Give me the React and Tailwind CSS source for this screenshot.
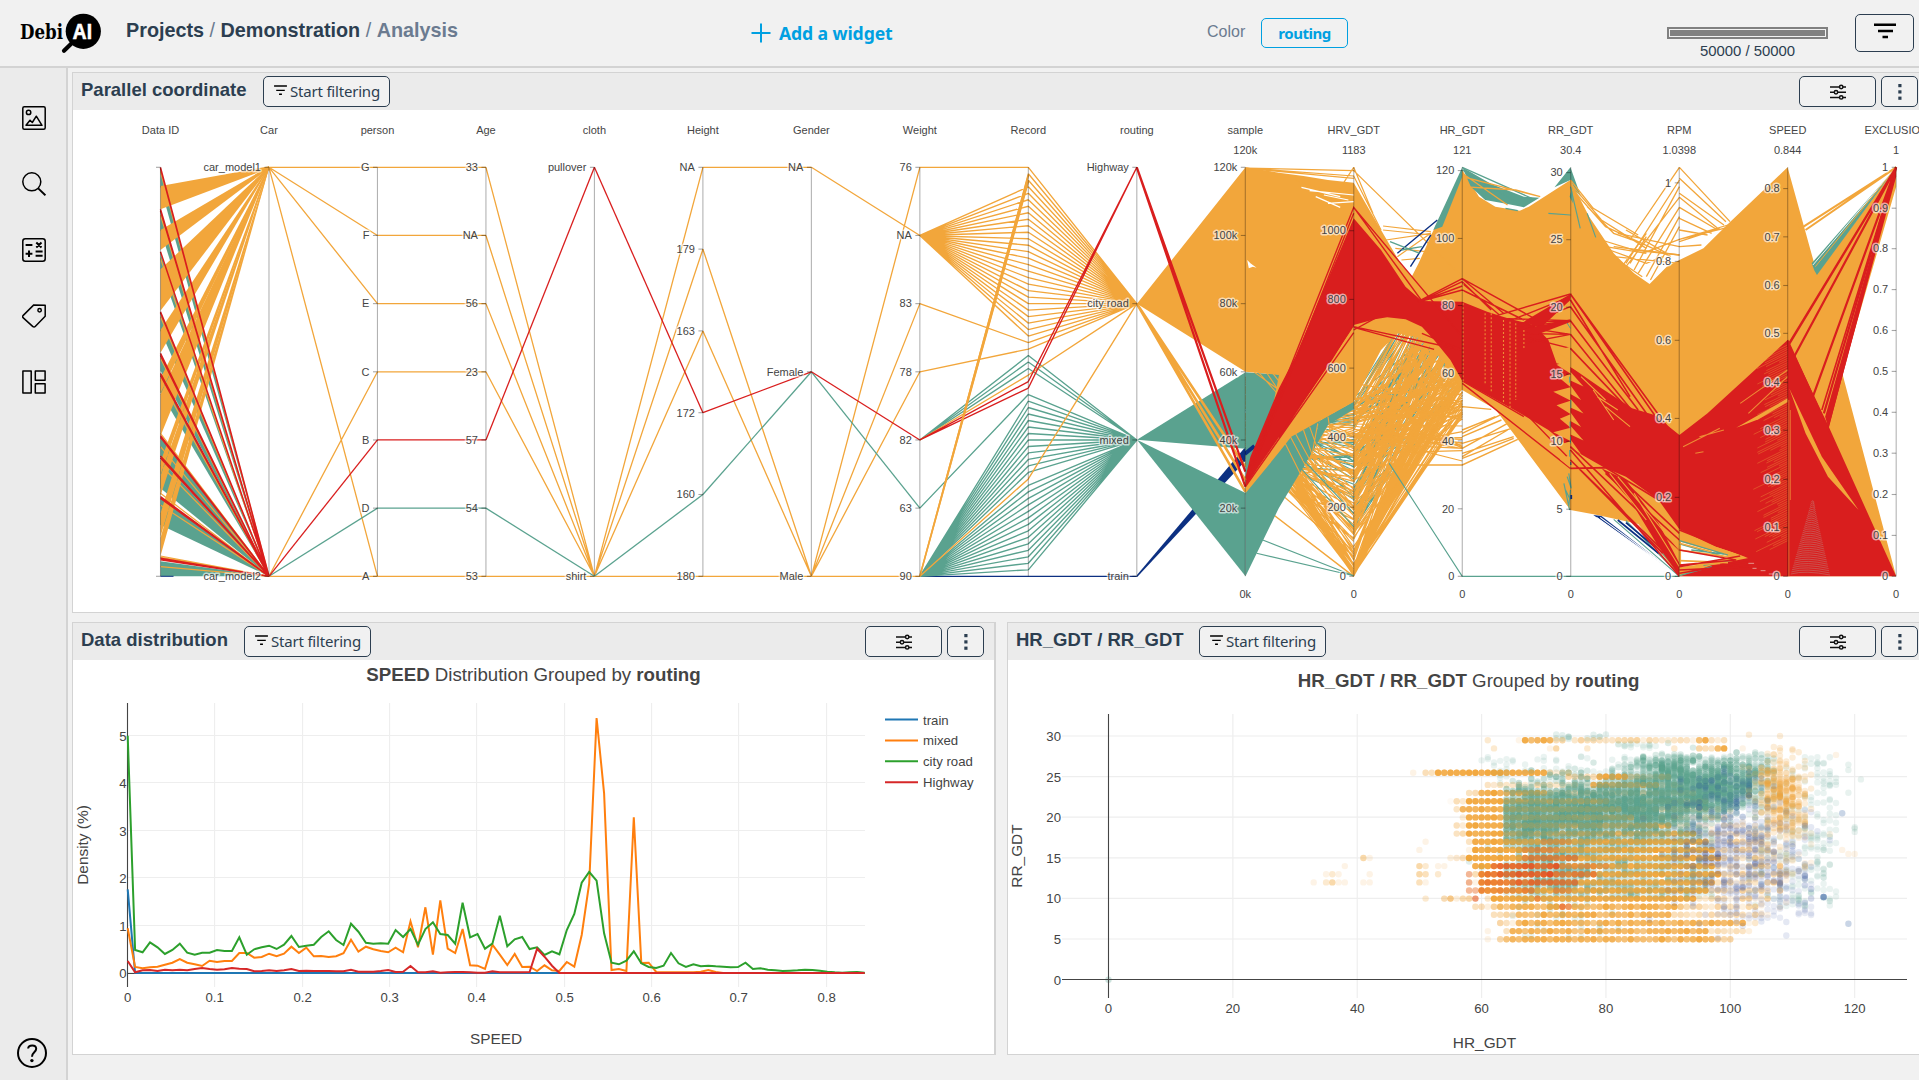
import React from "react";

const ORANGE = "#f2a63b";
const TEAL = "#5aa28f";
const RED = "#d91e1e";
const NAVY = "#0c3082";

function makeRandom(seed) {
  let s = seed;
  return () => {
    s = (s + 0x6d2b79f5) | 0;
    let t = Math.imul(s ^ (s >>> 15), 1 | s);
    t = (t + Math.imul(t ^ (t >>> 7), 61 | t)) ^ t;
    return ((t ^ (t >>> 14)) >>> 0) / 4294967296;
  };
}

/* ---------- icons ---------- */

function FilterLines({ className }) {
  return (
    <svg viewBox="0 0 18 14" className={className} stroke="#000" strokeWidth="2">
      <path d="M0 1.5h18M3 7.5h12M7 13h4" />
    </svg>
  );
}

function Sliders() {
  return (
    <svg viewBox="0 0 16 16" className="h-4 w-4" fill="none" stroke="#111" strokeWidth="1.5">
      <path d="M0 3h9.5M13 3h3M0 8.2h4M8 8.2h8M0 13.4h9.5M13 13.4h3" />
      <circle cx="11.2" cy="3" r="1.7" />
      <circle cx="6" cy="8.2" r="1.7" />
      <circle cx="11.2" cy="13.4" r="1.7" />
    </svg>
  );
}

function Dots() {
  return (
    <svg viewBox="0 0 4 18" className="h-[18px] w-1" fill="#2c3e50">
      <rect x="0.3" y="1" width="3.2" height="3.2" />
      <rect x="0.3" y="7.3" width="3.2" height="3.2" />
      <rect x="0.3" y="13.6" width="3.2" height="3.2" />
    </svg>
  );
}

function SideIcon({ children }) {
  return (
    <svg viewBox="0 0 24 24" className="block h-6 w-6" fill="none" stroke="#000" strokeWidth="1.5" strokeLinejoin="round">
      {children}
    </svg>
  );
}

function Logo() {
  return (
    <svg viewBox="0 0 84 42" className="block h-[42px] w-[84px]">
      <text x="0" y="26.7" fontSize="20.5" textLength="43" lengthAdjust="spacingAndGlyphs" fill="#000" className="font-['DejaVu_Serif'] font-bold">Debi</text>
      <path d="M52.5 30.5L44 38.7" stroke="#000" strokeWidth="4.2" strokeLinecap="round" />
      <circle cx="63.3" cy="19.3" r="17.6" fill="#000" />
      <text x="53" y="26.8" fontSize="21.5" textLength="19.5" lengthAdjust="spacingAndGlyphs" fill="#fff" stroke="#fff" strokeWidth="0.4" className="font-['Open_Sans'] font-bold">AI</text>
    </svg>
  );
}

/* ---------- parallel coordinates ---------- */

const AX = Array.from({ length: 17 }, (_, i) => 160.5 + i * 108.48);
const T = 167.3;
const B = 576.3;
const H = B - T;

const AXES = [
  { name: "Data ID", ticks: [["", 0], ["", 1]] },
  { name: "Car", ticks: [["car_model1", 0], ["car_model2", 1]] },
  { name: "person", ticks: [["G", 0], ["F", 1 / 6], ["E", 2 / 6], ["C", 3 / 6], ["B", 4 / 6], ["D", 5 / 6], ["A", 1]] },
  { name: "Age", ticks: [["33", 0], ["NA", 1 / 6], ["56", 2 / 6], ["23", 3 / 6], ["57", 4 / 6], ["54", 5 / 6], ["53", 1]] },
  { name: "cloth", ticks: [["pullover", 0], ["shirt", 1]] },
  { name: "Height", ticks: [["NA", 0], ["179", 0.2], ["163", 0.4], ["172", 0.6], ["160", 0.8], ["180", 1]] },
  { name: "Gender", ticks: [["NA", 0], ["Female", 0.5], ["Male", 1]] },
  { name: "Weight", ticks: [["76", 0], ["NA", 1 / 6], ["83", 2 / 6], ["78", 3 / 6], ["82", 4 / 6], ["63", 5 / 6], ["90", 1]] },
  { name: "Record", ticks: [] },
  { name: "routing", ticks: [["Highway", 0], ["city road", 1 / 3], ["mixed", 2 / 3], ["train", 1]] },
  { name: "sample", max: "120k", min: "0k", ticks: [["120k", 0], ["100k", 1 / 6], ["80k", 2 / 6], ["60k", 3 / 6], ["40k", 4 / 6], ["20k", 5 / 6]] },
  { name: "HRV_GDT", max: "1183", min: "0", ticks: [["1000", 0.155], ["800", 0.323], ["600", 0.491], ["400", 0.66], ["200", 0.831], ["0", 1]] },
  { name: "HR_GDT", max: "121", min: "0", ticks: [["120", 0.008], ["100", 0.174], ["80", 0.338], ["60", 0.504], ["40", 0.669], ["20", 0.835], ["0", 1]] },
  { name: "RR_GDT", max: "30.4", min: "0", ticks: [["30", 0.013], ["25", 0.177], ["20", 0.342], ["15", 0.506], ["10", 0.67], ["5", 0.836], ["0", 1]] },
  { name: "RPM", max: "1.0398", min: "0", ticks: [["1", 0.038], ["0.8", 0.23], ["0.6", 0.423], ["0.4", 0.614], ["0.2", 0.807], ["0", 1]] },
  { name: "SPEED", max: "0.844", min: "0", ticks: [["0.8", 0.052], ["0.7", 0.17], ["0.6", 0.289], ["0.5", 0.406], ["0.4", 0.526], ["0.3", 0.643], ["0.2", 0.763], ["0.1", 0.881], ["0", 1]] },
  { name: "EXCLUSION", max: "1", min: "0", ticks: [["1", 0], ["0.9", 0.1], ["0.8", 0.199], ["0.7", 0.299], ["0.6", 0.399], ["0.5", 0.499], ["0.4", 0.599], ["0.3", 0.699], ["0.2", 0.8], ["0.1", 0.9], ["0", 1]] },
];

/* value-to-value links between neighbouring categorical axes */
const LINKS = [
  [1, ORANGE, [[0, 0], [0, 1 / 6], [0, 2 / 6], [0, 1], [1, 3 / 6], [1, 1]]],
  [1, TEAL, [[1, 5 / 6]]],
  [1, RED, [[1, 4 / 6]]],
  [2, ORANGE, [[0, 0], [1 / 6, 1 / 6], [2 / 6, 2 / 6], [0.5, 0.5], [1, 1]]],
  [2, TEAL, [[5 / 6, 5 / 6]]],
  [2, RED, [[4 / 6, 4 / 6]]],
  [3, ORANGE, [[0, 1], [1 / 6, 1], [2 / 6, 1], [0.5, 1], [1, 1]]],
  [3, TEAL, [[5 / 6, 1]]],
  [3, RED, [[4 / 6, 0]]],
  [4, ORANGE, [[1, 0], [1, 0.2], [1, 0.4], [1, 1]]],
  [4, TEAL, [[1, 0.8]]],
  [4, RED, [[0, 0.6]]],
  [5, ORANGE, [[0, 0], [0.2, 1], [0.4, 1], [1, 1]]],
  [5, TEAL, [[0.8, 0.5]]],
  [5, RED, [[0.6, 0.5]]],
  [6, ORANGE, [[0, 1 / 6], [1, 0], [1, 2 / 6], [1, 3 / 6], [1, 1]]],
  [6, TEAL, [[0.5, 5 / 6]]],
  [6, RED, [[0.5, 4 / 6]]],
];

function seg(i, a, b) {
  return `M${AX[i]} ${T + a * H}L${AX[i + 1]} ${T + b * H}`;
}

function recordLinks() {
  const out = { [NAVY]: "", [TEAL]: "", [ORANGE]: "", [RED]: "" };
  for (let k = 0; k <= 63; k++) {
    const r = k / 63;
    let color = TEAL;
    let weight = 1;
    let routing = 2 / 3;
    if (k === 0) { color = ORANGE; weight = 0; routing = 1 / 3; }
    else if (k <= 2) { color = ORANGE; weight = 1; routing = 1 / 3; }
    else if (k <= 26) { color = ORANGE; weight = 1 / 6; routing = 1 / 3; }
    else if (k === 27) { color = ORANGE; weight = 2 / 6; routing = 1 / 3; }
    else if (k === 28) { color = ORANGE; weight = 3 / 6; routing = 1 / 3; }
    else if (k <= 31) { weight = 4 / 6; }
    else if (k === 32) { color = ORANGE; weight = 4 / 6; routing = 1 / 3; }
    else if (k <= 34) { color = RED; weight = 4 / 6; routing = 0; }
    else if (k === 35) { weight = 5 / 6; }
    else if (k === 48) { color = ORANGE; routing = 1 / 3; }
    else if (k === 63) { color = NAVY; routing = 1; }
    out[color] += seg(7, weight, r) + seg(8, r, routing);
  }
  return out;
}

const ID_ORANGE = [[558, 628], [690, 750], [808, 932], [990, 1058], [1135, 1180], [1183, 1308], [1385, 1425], [1428, 1487], [1540, 1610], [1613, 1668]];
const ID_TEAL = [[508, 560], [632, 690], [758, 805], [940, 992], [1062, 1112], [1122, 1178], [1312, 1375], [1378, 1465], [1495, 1575], [1684, 1729]];
const ID_RED = [502, 505, 628, 632, 755, 935, 938, 1060, 1066, 1120, 1126, 1307, 1312, 1368, 1374, 1490, 1495, 1675, 1679];

/*
 * The dense right part is kept in a local grid: u = 2.45 px units from
 * x = 1279, v = thirds of a pixel from the page top.
 */
const U = [-348, -82.5, 183, 449, 714, 981, 1246, 1512];

function fan(rnd, n, a, b, from, to) {
  let d = "";
  for (let k = 0; k < n; k++) {
    const y0 = from[0] + (from[1] - from[0]) * rnd();
    const y1 = to[0] + (to[1] - to[0]) * rnd();
    d += `M${U[a]} ${y0.toFixed(0)}L${U[b]} ${y1.toFixed(0)}`;
  }
  return d;
}

function Fill({ color, points }) {
  return <polygon fill={color} points={points} />;
}

function Strokes({ color, d, w = 1.1, o = 1 }) {
  return <path d={d} fill="none" stroke={color} strokeWidth={w} strokeOpacity={o} vectorEffect="non-scaling-stroke" />;
}

function DenseRegion() {
  const rnd = makeRandom(11);
  let saw = "";
  for (let k = 0; k < 9; k++) {
    const v = 1040 + k * 40.5;
    saw += `M714 ${v}L${672 + (k % 3) * 8} ${v + 14}L714 ${v + 40}Z`;
  }
  let sawRight = "";
  for (let k = 0; k < 8; k++) {
    const v = 1075 + k * 40.5;
    sawRight += `M714 ${v}L${740 + (k % 2) * 6} ${v + 44}L714 ${v + 26}Z`;
  }
  let moire = "";
  for (let k = 0; k < 34; k++) {
    const v = 1722 - k * 6.5;
    moire += `M${1254 + k * 1.5} ${v}Q${1290 + k * 0.6} ${v - 12} ${1350 - k * 1.2} ${v + 3}`;
  }
  let speedTex = "";
  for (let k = 0; k < 90; k++) {
    const v = 1035 + k * 6.6;
    const len = 15 + rnd() * 70;
    speedTex += `M1246 ${v.toFixed(0)}L${(1246 - len).toFixed(0)} ${(v + len * 0.6).toFixed(0)}`;
  }
  return (
    <g transform="translate(1279 0) scale(0.408163 0.333333)">
      {/* scribble around the HRV axis */}
      <Strokes color={TEAL} d={fan(rnd, 60, 2, 3, [1190, 1600], [620, 1160])} />
      <Strokes color={ORANGE} d={fan(rnd, 110, 2, 3, [1190, 1729], [620, 1180])} w={1.2} />
      <Strokes color={ORANGE} d={fan(rnd, 50, 2, 3, [1700, 1729], [900, 1260])} w={1.2} />
      <Strokes color={ORANGE} d={fan(rnd, 30, 2, 3, [1250, 1650], [1130, 1260])} w={1.2} />
      <Strokes color={ORANGE} d={fan(rnd, 18, 2, 3, [1190, 1420], [1200, 1395])} w={1.2} />
      <Strokes color={TEAL} d={fan(rnd, 30, 1, 2, [1180, 1400], [1220, 1500])} />
      <Strokes color={ORANGE} d={fan(rnd, 90, 1, 2, [1130, 1400], [1200, 1680])} w={1.2} />
      <Strokes color={ORANGE} d={fan(rnd, 30, 1, 2, [1120, 1300], [1690, 1729])} w={1.2} />
      <Strokes color={ORANGE} d="M183 1395L449 1395L585 1318M449 1370L560 1290M449 1360L575 1310M449 1345L560 1270M449 1330L570 1285M449 1310L545 1260M449 1290L530 1250M449 1220L520 1228M449 1375L575 1315M449 1300L550 1240M449 1220L183 1240M449 1205L183 1150M449 1340L300 1240M-82 1480L183 1729" w={1.4} />

      {/* routing to sample */}
      <Fill color={NAVY} points="-348,1725 -348,1732 -82,1382 -82,1340" />
      <Fill color={TEAL} points="-348,1319 -82,1117 -82,1346" />
      <Fill color={TEAL} points="-348,1319 -82,1479 -82,1729" />
      <Fill color={TEAL} points="-82,1117 0,1123 60,1140 120,1200 100,1262 75,1370 0,1523 -82,1729" />
      <Fill color={TEAL} points="100,1262 183,1205 183,1228 120,1275 70,1380" />
      <Strokes color={ORANGE} w={1.1} d="M95 1270L80 1370M75 1280L110 1400M60 1290L100 1430M40 1300L85 1400M28 1310L75 1420M15 1330L60 1440M120 1250L130 1330M-60 1117L0 1170M-50 1117L10 1200M-30 1119L15 1200M-15 1120L10 1160" />
      <Strokes color={NAVY} w={4} d="M-84 1362L-60 1338" />
      <Strokes color={TEAL} w={1.1} d="M-40 1620L183 1727M-55 1660L183 1727M270 1390L449 1729H981M50 1400L183 1580M60 1380L183 1540" />
      <Fill color={ORANGE} points="-348,911 -82,502 0,518 60,528 120,540 183,548 250,690 300,795 325,830 342,790 375,700 449,510 490,590 530,620 590,632 612,620 714,540 760,650 820,760 870,820 908,852 950,800 981,780 1040,745 1100,672 1246,502 1318,820 1512,502 1512,560 1380,1120 1512,1729 981,1729 880,1572 780,1545 714,1530 585,1318 530,1228 449,1170 400,1080 350,1015 290,1000 250,1050 183,1205 100,1262 30,1310 0,1357 -82,1480 -82,1430 -20,1250 0,1125 -82,1115" />
      <polygon fill="#fff" points="-78,780 -74,805 -64,800 -55,803 -70,790" />

      {/* upper outliers */}
      <Strokes color={ORANGE} w={1.2} d="M-82 504L183 512L449 830M-82 505L183 535M-82 504L183 528L250 690M183 502L120 620M183 502L230 640M40 540L183 600M60 560L183 618M90 575L160 628M183 560L130 610M255 678L372 695M255 690L375 705M262 720L372 700M285 745L360 755M290 770L372 700M300 780L345 775" />
      <Strokes color="#fff" w={1.2} d="M55 562L150 590M75 572L183 585M90 590L150 622M110 585L170 600M120 610L183 605" />
      <Strokes color={NAVY} w={1.4} d="M290 760L388 660M322 800L372 705" />
      <Strokes color={TEAL} w={1.4} d="M272 725L345 760M300 750L350 740" />
      <Fill color={TEAL} points="378,690 449,502 449,530 400,680" />
      <Fill color={TEAL} points="449,502 520,552 600,590 638,593 600,622 560,612 505,600 470,560" />
      <Fill color={TEAL} points="675,562 714,502 740,590 728,575 714,540" />
      <Fill color={TEAL} points="712,590 718,560 720,610" />
      <Strokes color={TEAL} w={1.2} d="M449 502L625 598M449 510L600 620M555 625L585 632M714 560L738 685M755 640L776 712M660 640L714 645" />
      <Strokes color={ORANGE} w={1.3} d="M449 530L640 590M449 560L580 570L640 590M449 520L560 615M714 540L770 625L880 705M714 550L790 660L900 745M720 570L800 680L960 770M755 620L820 700L890 730M790 720L870 750L981 765M800 740L900 760M820 770L981 790M840 800L900 700M810 750L900 790L940 770M830 780L890 830" />
      <Strokes color={ORANGE} w={1.3} d="M981 502L860 720M981 502L1105 665M981 540L850 790M981 535L1095 665M981 560L870 810M981 580L1090 675M981 592L850 800M981 592L1080 690M981 622L880 820M981 622L1075 690M981 650L900 830M981 655L1060 700M981 680L910 840M981 690L1050 705M981 718L890 760M981 718L1100 682M981 740L1035 735M981 740L830 700M981 765L820 740M850 690L950 760M900 710L860 790M981 718L1100 675M981 725L1080 685" />
      <Strokes color={ORANGE} w={2} d="M1285 680L1512 502M1290 690L1512 502M1265 655L1280 690L1310 800" />
      <Fill color={TEAL} points="1305,790 1512,502 1318,825 1312,812" />
      <Strokes color="#fff" w={0.9} d="M1308 795L1512 502" />
      <Strokes color={ORANGE} w={1} d="M1314 800L1512 502" />
      <Fill color={NAVY} points="770,1545 790,1548 981,1729" />
      <Strokes color="#fff" w={1.1} d="M778 1552L975 1724M787 1552L975 1722" />
      <Strokes color={TEAL} w={1.2} d="M820 1558L981 1729M850 1562L981 1725M870 1570L970 1700M710 1420L716 1465L706 1430M702 1470L714 1500M712 1530L698 1450M714 1470L710 1520" />
      <Strokes color={NAVY} w={1.8} d="M830 1560L930 1660M850 1568L920 1640M714 1385V1395M716 1485V1497" />

      {/* red mass */}
      <Fill color={RED} points="-82,1430 -70,1370 0,1165 40,1070 183,655 250,750 310,860 350,903 449,905 510,935 560,955 625,975 660,1020 680,1090 714,1100 790,1165 865,1225 920,1245 981,1305 1050,1240 1246,1020 1345,1275 1512,1729 981,1729 1060,1690 1150,1672 1070,1640 981,1588 930,1500 850,1430 800,1405 714,1345 660,1290 580,1232 449,1143 420,1080 380,1020 350,980 310,958 265,952 235,958 183,975 130,1080 0,1312 -50,1400 -82,1460" />
      <Strokes color={RED} w={1.4} d="M-82 1440L183 622L350 903M-82 1460L183 640M183 622L449 1010M183 990L235 955M183 998L-82 1460M183 980L449 1050L350 1000M183 982L380 1048M183 975L0 1312M340 905L449 836M345 905L449 845M350 903L449 870M350 903L449 858M449 836L550 940M449 845L520 930M449 850L540 945M449 836L625 955M449 870L600 960M510 955L714 882M560 965L714 890M600 975L714 920M540 955L714 962M560 970L714 962M590 980L714 1003M570 985L714 962M580 1000L714 1003L600 1030M600 1010L714 1045M449 1143L600 1250M449 1150L714 1405M600 1235L714 1380" />
      <path d={saw} fill={ORANGE} />
      <path d={sawRight} fill={ORANGE} />
      <Strokes color={TEAL} w={1} d="M712 1130V1148M715 1200V1225M713 1265V1285M714 1310V1330M712 1350V1370M704 965L714 985" />
      <Fill color={RED} points="600,965 714,882 714,900 640,985" />
      <Fill color={RED} points="590,990 714,958 714,966 630,1005" />
      <path d="M505 940V1150M520 940V1180M550 960V1210M566 965V1225M580 970V1200M600 990V1050M451 850V1145" fill="none" stroke={ORANGE} strokeWidth="1.1" strokeDasharray="2 2" strokeOpacity="0.8" vectorEffect="non-scaling-stroke" />
      <Strokes color={RED} w={1.6} d="M714 882L981 1330M714 882L920 1245M714 920L900 1240M714 962L880 1230M714 1003L860 1225M714 1045L850 1220M714 900L860 1190M714 1405L800 1403L930 1500M714 1350L981 1729M714 1380L981 1700M714 1340L981 1650M714 1380L940 1660M800 1420L981 1620M850 1450L981 1600" />
      <Fill color={RED} points="790,1405 850,1440 930,1570 981,1690 981,1729 930,1640 860,1500" />
      <Strokes color={ORANGE} w={1.1} d="M780 1190L830 1230M800 1220L860 1280M830 1430L981 1650M870 1480L981 1700M810 1420L900 1560M740 1130L800 1200M770 1170L820 1260" />

      {/* RPM to SPEED details */}
      <Fill color={ORANGE} points="981,1596 1070,1640 1150,1674 1060,1696 981,1729" />
      <Fill color="#fff" points="985,1626 1075,1658 1105,1670 1060,1690 985,1700" />
      <Strokes color={TEAL} w={1.3} d="M981 1622L1100 1665M981 1632L1090 1670M1010 1650L1090 1662M1040 1696L1110 1680M981 1727L1060 1700" />
      <Strokes color={ORANGE} w={1.6} d="M981 1650L1110 1672M981 1682L1100 1688M981 1695L1080 1690M981 1630L1060 1655" />
      <Strokes color={RED} w={1.6} d="M981 1590L1150 1672M981 1650L1120 1680L981 1695M981 1700L1130 1668M981 1720L1150 1685M981 1710L1150 1700" />
      <Fill color={ORANGE} points="1120,1283 1246,1195 1246,1206 1175,1258" />
      <Strokes color={ORANGE} w={0.7} o={0.5} d={speedTex} />
      <Strokes color={ORANGE} w={1.1} d="M990 1340L1080 1285M1030 1310L1090 1290M1020 1360L1040 1355M1246 1110L1130 1210M1246 1130L1150 1240" o={0.8} />
      <Strokes color={ORANGE} w={1.2} d="M1249 1200V1729M1253 1230V1500" o={0.5} />
      <Fill color={ORANGE} points="1250,1165 1330,1370 1420,1530 1345,1430 1290,1300" />
      <Strokes color="#c08078" w={0.8} o={0.65} d={moire} />
      <Strokes color="#e9c4b8" w={1} o={0.7} d="M1150 1690h14M1180 1712h12M1160 1705h10M1200 1722h14" />
      <Strokes color={RED} w={2.2} d="M1246 1040L1512 502M1250 1030L1512 502M1262 1070L1512 502M1308 1190L1512 502M1335 1240L1512 502M1345 1280L1512 502" />
      <Fill color={RED} points="1338,1250 1512,502 1512,530 1346,1285" />
      <Strokes color={RED} w={1.6} d="M1330 1230L1512 502M1246 1020L1350 1300" />
    </g>
  );
}

function ParallelPlot() {
  const rec = recordLinks();
  const v = (n) => n / 3;
  const x0 = AX[0];
  const x1 = AX[1];
  return (
    <svg viewBox="73 110 1846 502" className="block h-[502px] w-[1846px] shrink-0 font-['Liberation_Sans']">
      <rect x="73" y="110" width="1846" height="502" fill="#fff" />
      {ID_TEAL.map(([a, b]) => (
        <polygon key={a} fill={TEAL} points={`${x0},${v(a)} ${x0},${v(b)} ${x1},${B}`} />
      ))}
      {ID_ORANGE.map(([a, b]) => (
        <polygon key={a} fill={ORANGE} points={`${x0},${v(a)} ${x0},${v(b)} ${x1},${T + 1} ${x1},${T - 1}`} />
      ))}
      <path stroke={ORANGE} strokeWidth="1.2" d={[515, 645, 775, 950, 1075, 1140, 1300, 1340, 1395, 1480, 1515, 1668, 1672, 1700].map((n) => `M${x0} ${v(n)}L${x1} ${B}`).join("")} />
      <path stroke={RED} strokeWidth="1.5" d={ID_RED.map((n) => `M${x0} ${v(n)}L${x1} ${B}`).join("")} />
      <path stroke={NAVY} strokeWidth="1" d={`M${x0} ${B}h13`} />

      {LINKS.map(([i, c, ls], k) => (
        <path key={k} stroke={c} strokeWidth="1.3" d={ls.map(([a, b]) => seg(i, a, b)).join("")} />
      ))}
      {[NAVY, TEAL, ORANGE, RED].map((c) => (
        <path key={c} stroke={c} strokeWidth="1.35" fill="none" d={rec[c]} />
      ))}
      <path stroke={ORANGE} strokeWidth="1.6" d={seg(7, 1, 0.02) + seg(7, 1, 0.035)} />

      <DenseRegion />
      <path stroke={ORANGE} strokeWidth="2.6" d={`M${AX[9]} ${v(911)}L${AX[10]} ${v(1400)}M${AX[9]} ${v(911)}L${AX[10]} ${v(1440)}M${AX[9]} ${v(911)}L${AX[10]} ${v(1475)}`} />
      <path stroke={RED} strokeWidth="2.2" d={`M${AX[9]} ${T}L${AX[10]} ${v(1415)}M${AX[9]} ${T}L${AX[10]} ${v(1460)}`} />

      {AXES.map((a, i) => (
        <g key={a.name} fontSize="11" fill="#444">
          <path d={`M${AX[i]} ${T}V${B}`} stroke="#000" strokeOpacity="0.3" strokeWidth="1.1" />
          <text x={AX[i]} y="134" textAnchor="middle">{a.name}</text>
          {a.max && <text x={AX[i]} y="154" textAnchor="middle">{a.max}</text>}
          {a.min && <text x={AX[i]} y="598" textAnchor="middle">{a.min}</text>}
          {a.ticks.map(([t, f], k) => (
            <g key={k}>
              <path d={`M${AX[i] - 4.5} ${T + f * H}h4.5`} stroke="#000" strokeOpacity="0.35" strokeWidth="1.1" />
              <text x={AX[i] - 8} y={T + f * H + 3.8} textAnchor="end" stroke="#fff" strokeOpacity="0.6" strokeWidth="3" strokeLinejoin="round" paintOrder="stroke">{t}</text>
            </g>
          ))}
        </g>
      ))}
    </svg>
  );
}

/* ---------- distribution ---------- */

const GREEN_V = [377, 1020, 1027, 997, 1012, 1032, 1020, 1001, 1028, 1034, 1028, 1028, 1020, 1023, 1023, 982, 1034, 1018, 1012, 1007, 1017, 1004, 978, 1011, 1007, 1004, 981, 964, 990, 1005, 941, 965, 998, 1001, 1000, 1001, 960, 981, 957, 1004, 957, 937, 972, 975, 1001, 878, 982, 972, 1016, 1001, 917, 1009, 988, 981, 1017, 1012, 1035, 1024, 1033, 960, 912, 818, 786, 812, 970, 1058, 1063, 1052, 1024, 1060, 1071, 1074, 1067, 1029, 1060, 1071, 1063, 1069, 1067, 1069, 1070, 1072, 1071, 1058, 1077, 1075, 1079, 1081, 1083, 1082, 1081, 1079, 1080, 1082, 1085, 1087, 1088, 1087, 1086, 1088];
const MIXED_V = [955, 1071, 1075, 1072, 1070, 1064, 1058, 1047, 1058, 1063, 1068, 1052, 1056, 1053, 1053, 1029, 1029, 1043, 1041, 1031, 1039, 1031, 1010, 1029, 1013, 1039, 1038, 1041, 1039, 1030, 989, 1025, 1010, 1018, 1023, 1027, 1013, 1027, 934, 1012, 892, 1034, 871, 1016, 1029, 957, 1066, 1067, 1077, 1004, 1034, 1065, 1032, 1071, 1070, 1083, 1066, 1081, 1083, 1056, 1070, 975, 820, 324, 550, 1080, 1077, 1083, 622, 1059, 1058, 1086, 1087, 1087, 1087, 1087, 1087, 1085, 1080, 1086];
const RED_V = [1053, 1087, 1081, 1080, 1083, 1079, 1081, 1079, 1081, 1077, 1074, 1077, 1079, 1078, 1074, 1076, 1077, 1084, 1083, 1081, 1083, 1081, 1077, 1083, 1082, 1083, 1083, 1083, 1084, 1084, 1079, 1085, 1085, 1085, 1083, 1080, 1086, 1085, 1068, 1087, 1087, 1084, 1088, 1087, 1086, 1086, 1087, 1088, 1088, 1084, 1087, 1087, 1087, 1087, 1086, 1016, 1040, 1067];
const BLUE_V = [838];

function Series({ values, color }) {
  const pts = [];
  for (let k = 0; k < 100; k++) {
    const val = k < values.length ? values[k] : 1089;
    pts.push(`${(127.7 + k * 7.443).toFixed(1)},${(610 + val / 3).toFixed(1)}`);
  }
  return <polyline points={pts.join(" ")} fill="none" stroke={color} strokeWidth="2" />;
}

function DistributionPlot() {
  const xs = [0, 1, 2, 3, 4, 5, 6, 7, 8].map((k) => [k === 0 ? "0" : `0.${k}`, Math.round(127.8 + k * 87.37) - 0.4]);
  const ys = [0, 1, 2, 3, 4, 5].map((k) => [String(k), Math.round(973.2 - k * 47.54) - 0.5]);
  const legend = [["train", "#1f77b4"], ["mixed", "#ff7f0e"], ["city road", "#2ca02c"], ["Highway", "#d62728"]];
  return (
    <svg viewBox="73 660 921 393" className="block h-[393px] w-[921px] shrink-0 font-['Liberation_Sans']" fill="#444">
      <rect x="73" y="660" width="921" height="393" fill="#fff" />
      <text x="533.5" y="681" fontSize="18.7" textAnchor="middle">
        <tspan className="font-bold">SPEED</tspan> Distribution Grouped by <tspan className="font-bold">routing</tspan>
      </text>
      <g stroke="#eee" strokeWidth="1.1">
        {xs.map(([t, x]) => <path key={t} d={`M${x} 703V987`} />)}
        {ys.map(([t, y]) => <path key={t} d={`M127.5 ${y}H865`} />)}
      </g>
      <path d="M127.5 703V987M127.5 973.5H865" stroke="#444" strokeWidth="1.1" />
      <Series values={BLUE_V} color="#1f77b4" />
      <Series values={MIXED_V} color="#ff7f0e" />
      <Series values={GREEN_V} color="#2ca02c" />
      <Series values={RED_V} color="#d62728" />
      <g fontSize="13.2">
        {xs.map(([t, x]) => <text key={t} x={x} y="1002" textAnchor="middle">{t}</text>)}
        {ys.map(([t, y]) => <text key={t} x="126.5" y={y + 5} textAnchor="end">{t}</text>)}
        {legend.map(([t, c], k) => (
          <g key={t}>
            <path d={`M885 ${719.5 + k * 20.9}H918`} stroke={c} strokeWidth="2" />
            <text x="923" y={724.7 + k * 20.7}>{t}</text>
          </g>
        ))}
      </g>
      <text x="496" y="1044" fontSize="15.4" textAnchor="middle">SPEED</text>
      <text transform="translate(88 845) rotate(-90)" fontSize="15.4" textAnchor="middle">Density (%)</text>
    </svg>
  );
}

/* ---------- scatter ---------- */

const sx = (hr) => 1108.5 + 6.218 * hr;
const sy = (rr) => 979.8 - 8.12 * rr;

/* rr, first hr, last hr, dense from, dense to */
const ROWS = [
  [5, 63, 100, 64, 97], [6, 64, 103, 65, 96], [7, 63, 104, 66, 102], [8, 62, 106, 66, 90], [9, 59, 104, 63, 92],
  [10, 54, 106, 62, 94], [11, 58, 108, 60, 96], [12, 58, 108, 60, 97], [13, 58, 109, 60, 98], [14, 58, 108, 59, 97],
  [15, 55, 107, 58, 98], [16, 58, 106, 59, 97], [17, 58, 105, 59, 96], [18, 56, 104, 58, 94], [19, 56, 102, 58, 90],
  [20, 57, 100, 58, 84], [21, 56, 98, 57, 82], [22, 55, 96, 58, 80], [23, 58, 94, 60, 70], [24, 61, 92, 78, 88],
  [25, 74, 90, 79, 83], [25.5, 51, 74, 53, 70], [28.5, 95, 99, 98, 99], [29.5, 66, 73, 67, 71], [29.5, 75, 99, 95, 96],
];

const LOOSE = [[33, 12, 1], [35, 13, 1], [35, 12, 2], [36, 13, 2], [36, 12, 4], [37, 13, 1], [37, 12, 1], [38, 14, 1], [38, 12, 1], [41, 15, 4], [42, 15, 1], [42, 13, 1], [41, 12, 1], [42, 12, 1], [49, 25.5, 1], [50, 16, 1], [51, 17, 1], [50, 14, 4], [51, 14, 2], [50, 13, 4], [51, 13, 3], [50, 12, 3], [51, 12, 1], [53, 14, 1], [54, 14, 1], [53, 13, 2], [51, 10, 2], [54, 10, 1], [55, 10, 2], [56, 15, 1], [61, 29.5, 2], [62, 28.5, 2], [61, 6, 1], [61, 5, 1], [102, 28.5, 1], [118, 16, 1], [119, 15.5, 1], [120, 15.5, 1], [117, 27.7, 1], [71, 28.5, 1], [72, 28.5, 4], [77, 28.5, 2], [91, 28.5, 2]];

function scatterDots() {
  const rnd = makeRandom(5);
  const gauss = () => (rnd() + rnd() + rnd() + rnd() - 2) / 0.5774;
  const dots = [];
  const put = (hr, rr, c, o) => dots.push([sx(Math.round(hr)), sy(rr), c, o]);
  LOOSE.forEach(([h, r, n]) => put(h, r, ORANGE, 1 - Math.pow(0.87, n)));
  const row = ([rr, a, b, da, db], k) => {
    for (let h = a; h <= b; h++) {
      const dense = h >= da && h <= db;
      if (!dense && rnd() < 0.15) continue;
      const low = rr < 10 || rr > 25.6;
      put(h, rr, ORANGE, k * (dense ? (low ? 0.4 + rnd() * 0.5 : 0.75 + rnd() * 0.25) : 0.12 + rnd() * 0.25));
    }
  };
  ROWS.forEach((r) => row(r, 1));
  /* main teal band */
  for (let k = 0; k < 3900; k++) {
    const h = 63.5 + rnd() * 44;
    if (h > 100 && rnd() < (h - 98) / 10) continue;
    if (h < 67 && rnd() < 0.4) continue;
    const mid = h < 85 ? 19.8 + (h - 63) * 0.07 : 21.3 + (h - 85) * 0.17;
    const r = mid + gauss() * (h < 95 ? 2 : 1.7);
    if (r < 28) put(h, Math.round(r * 4) / 4, TEAL, 0.24);
  }
  for (let k = 0; k < 900; k++) put(65 + rnd() * 32, 10 + rnd() * 9, TEAL, 0.15);
  for (let k = 0; k < 240; k++) put(89.5 + gauss() * 3, 25.8 + gauss() * 1.1, TEAL, 0.22);
  for (let k = 0; k < 260; k++) put(73 + gauss() * 5, 13.5 + gauss() * 1.9, TEAL, 0.18);
  for (let k = 0; k < 120; k++) put(60 + rnd() * 40, 24 + rnd() * 3.5, TEAL, 0.13);
  for (let k = 0; k < 260; k++) put(103 + rnd() * 14, 9 + rnd() * 18.5, TEAL, 0.13);
  for (let k = 0; k < 26; k++) put(112 + rnd() * 9, 13 + rnd() * 14, TEAL, 0.14);
  for (let k = 0; k < 26; k++) put(64 + rnd() * 18, 5.2 + rnd() * 5, TEAL, 0.14);
  for (let k = 0; k < 14; k++) put(72 + rnd() * 8, 29.6 + rnd() * 0.7, TEAL, 0.16);
  for (let k = 0; k < 16; k++) put(82 + rnd() * 6, 28.5 + rnd() * 0.8, TEAL, 0.12);
  /* rows shine through the cloud */
  ROWS.forEach((r) => row(r, r[0] < 18 ? 0.7 : r[0] < 25 ? 0.28 : 0.6));
  for (let k = 0; k < 330; k++) put(108.5 + gauss() * 2, 22.5 + gauss() * 2.6, ORANGE, 0.2);
  for (let k = 0; k < 150; k++) put(107 + gauss() * 3.4, 16 + gauss() * 3.6, ORANGE, 0.13);
  for (let k = 0; k < 420; k++) put(101 + gauss() * 5.2, 15.5 + gauss() * 3.4, "#3f5ca8", 0.14);
  for (let k = 0; k < 80; k++) put(98.5 + gauss() * 3.6, 22 + gauss() * 1.7, "#28599a", 0.17);
  for (let k = 0; k < 90; k++) put(99 + rnd() * 14.4, 7.5 + rnd() * 6, "#3f5ca8", 0.12);
  [[119, 6.9], [118, 20.5], [115, 10.2], [115, 10.2], [115, 10.2]].forEach(([h, r]) => put(h, r, "#28599a", 0.25));
  /* highway samples */
  const reds = [[16, 67, 72, 0.3], [15, 67, 75, 0.4], [14, 62, 72, 0.75], [14, 73, 80, 0.25], [13, 60, 62, 0.5], [13, 63, 71, 0.85], [13, 72, 78, 0.45], [12, 60, 66, 0.5], [12, 66, 75, 0.6], [11, 58, 60, 0.35], [11, 61, 68, 0.35], [11, 72, 74, 0.3], [10, 59, 59, 0.5], [10, 69, 69, 0.5], [9, 73, 74, 0.55], [17, 70, 74, 0.2]];
  reds.forEach(([r, a, b, o]) => {
    for (let h = a; h <= b; h++) put(h, r, "#e2401f", o * (0.6 + rnd() * 0.4));
  });
  put(58, 13, RED, 0.2);
  put(58, 12, RED, 0.2);
  put(0, 0, TEAL, 0.3);
  return dots;
}

const DOTS = scatterDots();

function ScatterPlot() {
  return (
    <svg viewBox="1008 660 911 393" className="block h-[393px] w-[911px] shrink-0 font-['Liberation_Sans']" fill="#444">
      <rect x="1008" y="660" width="911" height="393" fill="#fff" />
      <text x="1468.5" y="687" fontSize="18.7" textAnchor="middle">
        <tspan className="font-bold">HR_GDT / RR_GDT</tspan> Grouped by <tspan className="font-bold">routing</tspan>
      </text>
      <g stroke="#eee" strokeWidth="1.2">
        {[20, 40, 60, 80, 100, 120].map((k) => <path key={k} d={`M${sx(k)} 714V998`} />)}
        {[5, 10, 15, 20, 25, 30].map((k) => <path key={k} d={`M1062 ${979.6 - k * 8.12}H1907`} />)}
      </g>
      {DOTS.map(([x, y, c, o], k) => (
        <circle key={k} cx={x.toFixed(1)} cy={y.toFixed(1)} r="3.2" fill={c} fillOpacity={o.toFixed(2)} />
      ))}
      <path d="M1108.5 714V998M1062 979.5H1907" stroke="#444" strokeWidth="1.1" />
      <g fontSize="13.2">
        {[0, 20, 40, 60, 80, 100, 120].map((k) => <text key={k} x={sx(k)} y="1013" textAnchor="middle">{k}</text>)}
        {[0, 5, 10, 15, 20, 25, 30].map((k) => <text key={k} x="1061" y={984.6 - k * 8.12} textAnchor="end">{k}</text>)}
      </g>
      <text x="1484.5" y="1048" fontSize="15.4" textAnchor="middle">HR_GDT</text>
      <text transform="translate(1021.5 856) rotate(-90)" fontSize="15.4" textAnchor="middle">RR_GDT</text>
    </svg>
  );
}

/* ---------- layout ---------- */

const OUTLINE = "flex shrink-0 items-center justify-center rounded-[5px] border border-[#2c3e50] bg-[#f1f1f1]";

function Panel({ title, titleWidth, className, children }) {
  return (
    <section className={`overflow-hidden border border-[#d3d3d3] bg-white ${className}`}>
      <div className="flex h-[37px] items-center bg-[#ebebeb]">
        <h2 className={`ml-2 -mt-1 whitespace-nowrap font-['Liberation_Sans'] text-[18.5px] font-bold text-[#2c3e50] ${titleWidth}`}>{title}</h2>
        <button className={`${OUTLINE} h-[31px] w-[127px] pl-px font-['Noto_Sans',sans-serif] text-[15px] tracking-[-0.2px] text-[#2c3e50]`}>
          <FilterLines className="mr-[3px] mb-[3px] h-[10px] w-[13px]" />
          <span className="whitespace-nowrap">Start filtering</span>
        </button>
        <button className={`${OUTLINE} ml-auto h-[31px] w-[77px]`}><Sliders /></button>
        <button className={`${OUTLINE} ml-[5px] h-[31px] w-[37px]`}><Dots /></button>
        <span className="w-[10px] shrink-0" />
      </div>
      {children}
    </section>
  );
}

export default function App() {
  return (
    <div className="flex h-[1080px] w-[1919px] flex-col overflow-hidden bg-[#f1f1f1] text-[#2c3e50]">
      <header className="flex h-[68px] shrink-0 border-b-2 border-[#d3d3d3] font-['Liberation_Sans']">
        <div className="mt-3 ml-5 w-[84px] shrink-0"><Logo /></div>
        <nav className="mt-[17px] ml-[22px] w-[625px] whitespace-pre text-[19.8px] leading-[26px] text-[#6b7b90]">
          <span className="font-bold text-[#2c3e50]">Projects</span>
          <span> / </span>
          <span className="font-bold text-[#2c3e50]">Demonstration</span>
          <span> / </span>
          <span className="font-bold">Analysis</span>
        </nav>
        <div className="mt-[18px] flex h-[30px] w-[456px] items-center font-['Noto_Sans',sans-serif] text-[17.6px] font-bold text-[#00a0e1]">
          <svg viewBox="0 0 20 20" className="mr-2 h-5 w-5" stroke="#00a0e1" strokeWidth="2"><path d="M10 0.5v19M0.5 10h19" /></svg>
          <span className="whitespace-nowrap tracking-[-0.1px]">Add a widget</span>
        </div>
        <span className="mt-[20px] w-[54px] text-base leading-6 text-[#6b7b90]">Color</span>
        <button className="mt-[18px] flex h-[30px] w-[87px] items-center justify-center rounded-[5px] border border-[#00a0e1] font-['Noto_Sans',sans-serif] text-[15px] font-bold tracking-[-0.5px] text-[#00a0e1]">routing</button>
        <div className="mt-[27px] ml-[319px] flex w-[161px] flex-col items-center">
          <div className="h-3 w-full border-2 border-[#808080] p-px"><div className="h-full w-full bg-[#808080]" /></div>
          <span className="mt-0.5 whitespace-nowrap text-[14.9px] leading-5">50000 / 50000</span>
        </div>
        <button className="mt-[14px] ml-[27px] flex h-[38px] w-[59px] shrink-0 justify-center rounded-[5px] border border-[#2c3e50] pt-[8px]">
          <svg viewBox="0 0 22 16" className="h-4 w-[22px]" stroke="#000" strokeWidth="2.4"><path d="M0 1.7h22M4 8h15M8.500 14h5.500" /></svg>
        </button>
      </header>

      <div className="flex min-h-0 flex-1">
        <aside className="flex w-[68px] shrink-0 flex-col border-r-2 border-[#d3d3d3] bg-[#ebebeb] pt-[38px] pl-[22px]">
          <div className="flex flex-col gap-[42px]">
            <SideIcon>
              <rect x="0.8" y="0.8" width="22.4" height="22.4" rx="1.5" />
              <circle cx="6.6" cy="6.4" r="2.2" />
              <path d="M4 19.3L8 14.2l2.3 2.3 4-6.3 5.7 9.1z" />
            </SideIcon>
            <SideIcon>
              <circle cx="9.8" cy="9.8" r="9" />
              <path d="M16.2 16.4l7.2 6.9" strokeWidth="1.9" />
            </SideIcon>
            <SideIcon>
              <rect x="0.8" y="0.8" width="22.4" height="22.4" rx="2.5" />
              <path d="M3.6 7h6.8M14.3 4.5l5.2 5M19.5 4.5l-5.2 5M3.6 15.7h6.8M7 12.4v6.6M13.6 13.6h7M13.6 17.7h7" strokeWidth="2" />
            </SideIcon>
            <SideIcon>
              <path d="M23.2 1.2v11L13.2 22.6a1.6 1.6 0 0 1-2.3 0L1 13.6a1.6 1.6 0 0 1 0-2L11.8.9z" />
              <circle cx="17.6" cy="6.2" r="1.7" />
            </SideIcon>
            <SideIcon>
              <rect x="0.9" y="0.9" width="8.3" height="22.2" />
              <rect x="13.3" y="0.9" width="9.8" height="9.4" />
              <rect x="13.3" y="13.8" width="9.8" height="9.3" />
            </SideIcon>
          </div>
          <svg viewBox="0 0 32 32" className="mt-auto mb-[11px] -ml-[6px] h-8 w-8" fill="none" stroke="#000" strokeWidth="2">
            <circle cx="16" cy="16" r="14" />
            <path d="M12.1 11.5c.4-4 8-4.2 8.1.3 0 3.6-4.2 3.6-4.2 8" />
            <circle cx="15.9" cy="23.6" r="1.7" fill="#000" stroke="none" />
          </svg>
        </aside>

        <main className="flex w-[1851px] shrink-0 flex-col gap-[9px] pt-1 pl-1">
          <Panel title="Parallel coordinate" titleWidth="w-[182px]" className="h-[541px] w-[1857px]">
            <ParallelPlot />
          </Panel>
          <div className="flex gap-[11px]">
            <Panel title="Data distribution" titleWidth="w-[163px]" className="h-[433px] w-[924px] shrink-0 border-r-2">
              <DistributionPlot />
            </Panel>
            <Panel title="HR_GDT / RR_GDT" titleWidth="w-[183px]" className="h-[433px] w-[922px] shrink-0">
              <ScatterPlot />
            </Panel>
          </div>
        </main>
      </div>
    </div>
  );
}
